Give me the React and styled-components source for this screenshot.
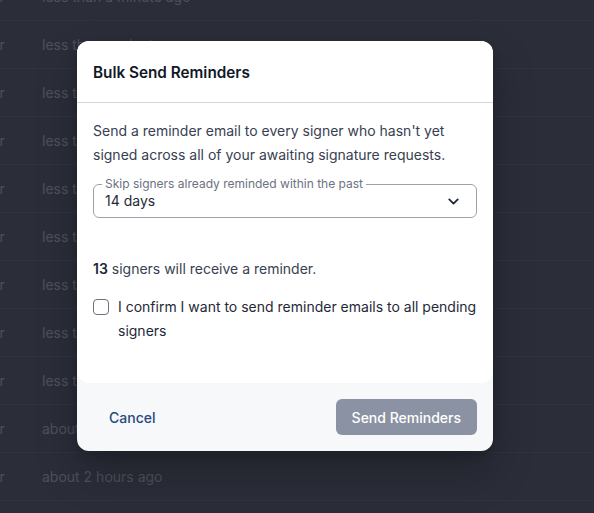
import React from "react";
import styled, { createGlobalStyle } from "styled-components";
import { ChevronDown } from "lucide-react";

const GlobalStyle = createGlobalStyle`
    html, body
    {
        margin: 0;
        padding: 0;
        background: #2b2e39;
        font-family: Inter, "Noto Sans", "Liberation Sans", sans-serif;
        -webkit-font-smoothing: antialiased;
    }
`;

const Page = styled.div`
    position: relative;
    width: 594px;
    height: 513px;
    overflow: hidden;
    background: #2b2e39;
`;

const Table = styled.div`
    margin-top: -27px;
    margin-left: -38px;
`;

const Row = styled.div`
    display: flex;
    align-items: center;
    height: 47px;
    border-bottom: 1px solid #30333f;
    font-size: 14px;
    color: #4d515d;
`;

const Cell = styled.div`
    width: ${props => props.width}px;
    white-space: nowrap;
`;

const Overlay = styled.div`
    position: absolute;
    inset: 0;
    padding: 41px 0 0 77px;
`;

const Modal = styled.div`
    width: 416px;
    background: #f7f8fa;
    border-radius: 12px;
    box-shadow: 0 20px 40px rgba(0, 0, 0, 0.25), 0 4px 10px rgba(0, 0, 0, 0.15);
    overflow: hidden;
`;

const Main = styled.div`
    background: #ffffff;
    border-radius: 0 0 12px 12px;
`;

const Header = styled.div`
    height: 61px;
    padding: 0 16px;
    display: flex;
    align-items: center;
    border-bottom: 1px solid #d4d7de;
`;

const Title = styled.h2`
    margin: 2px 0 0;
    font-size: 15.3px;
    font-weight: 600;
    color: #111827;
`;

const Body = styled.div`
    padding: 16px 16px 40px;
    font-size: 14px;
    line-height: 24px;
    color: #374151;
`;

const Text = styled.p`
    margin: 0;
`;

const Field = styled.div`
    position: relative;
    margin-top: 17px;
    height: 34px;
    box-sizing: border-box;
    border: 1px solid #9ca1ad;
    border-radius: 6px;
    padding: 0 14px 0 11px;
    display: flex;
    align-items: center;
    justify-content: space-between;
    color: #1f2937;
`;

const Legend = styled.span`
    position: absolute;
    top: -9px;
    left: 8px;
    padding: 0 3px;
    background: #ffffff;
    font-size: 12px;
    line-height: 16px;
    color: #6b7280;
`;

const Count = styled.p`
    margin: 39px 0 0;

    > strong
    {
        font-weight: 600;
        color: #1f2937;
    }
`;

const Confirm = styled.label`
    margin-top: 14px;
    display: flex;
    gap: 9px;
    color: #1f2937;
`;

const Box = styled.span`
    flex: none;
    margin-top: 4px;
    width: 16px;
    height: 16px;
    box-sizing: border-box;
    border: 1.5px solid #6b7280;
    border-radius: 4px;
    background: #ffffff;
`;

const Footer = styled.div`
    display: flex;
    justify-content: space-between;
    align-items: center;
    padding: 16px;
`;

const Button = styled.button`
    height: 36px;
    padding: 0 16px;
    border: none;
    border-radius: 6px;
    font-family: inherit;
    font-size: 14px;
    font-weight: 500;
    background: ${props => props.primary ? "#8b92a3" : "transparent"};
    color: ${props => props.primary ? "#ffffff" : "#274a7c"};
    cursor: pointer;
`;

const rows = [
    "less than a minute ago",
    "less than a minute ago",
    "less than a minute ago",
    "less than a minute ago",
    "less than a minute ago",
    "less than a minute ago",
    "less than a minute ago",
    "less than a minute ago",
    "less than a minute ago",
    "about 1 hour ago",
    "about 2 hours ago",
    "about 2 hours ago"
];

export default function App() {
    return (
        <Page>
            <GlobalStyle />
            <Table>
                {rows.map((time, i) => (
                    <Row key={i}>
                        <Cell width={80}>Signer</Cell>
                        <Cell width={300}>{time}</Cell>
                    </Row>
                ))}
            </Table>
            <Overlay>
                <Modal>
                    <Main>
                        <Header>
                            <Title>Bulk Send Reminders</Title>
                        </Header>
                        <Body>
                            <Text>Send a reminder email to every signer who hasn't yet signed across all of your awaiting signature requests.</Text>
                            <Field>
                                <Legend>Skip signers already reminded within the past</Legend>
                                <span>14 days</span>
                                <ChevronDown size={17} strokeWidth={2.6} color="#1f2937" />
                            </Field>
                            <Count><strong>13</strong> signers will receive a reminder.</Count>
                            <Confirm>
                                <Box />
                                <span>I confirm I want to send reminder emails to all pending signers</span>
                            </Confirm>
                        </Body>
                    </Main>
                    <Footer>
                        <Button>Cancel</Button>
                        <Button primary>Send Reminders</Button>
                    </Footer>
                </Modal>
            </Overlay>
        </Page>
    );
}
